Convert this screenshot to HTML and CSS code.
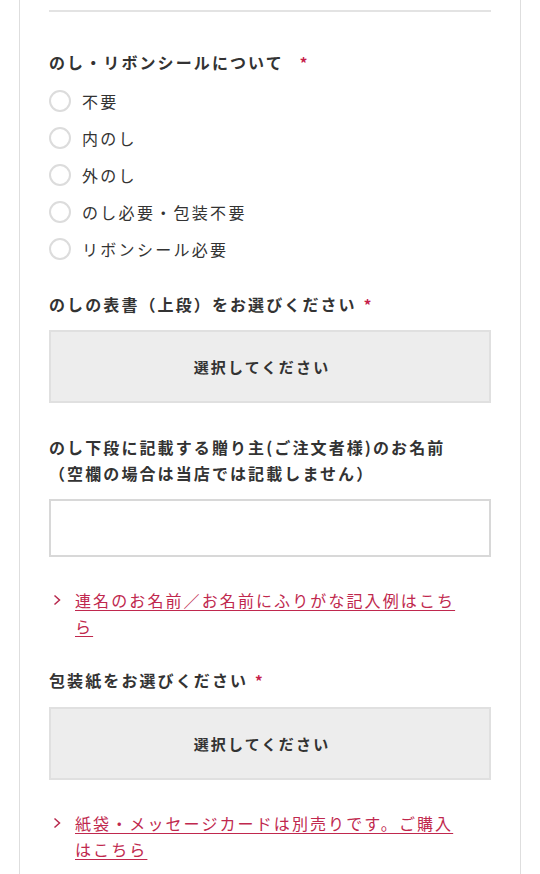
FILE: index.html
```html
<!DOCTYPE html>
<html lang="ja">
<head>
<meta charset="utf-8">
<link rel="stylesheet" href="styles.css">
</head>
<body>
<div class="card">
  <hr class="divider">

  <div class="field">
    <p class="label">のし・リボンシールについて<span class="req">*</span></p>
    <ul class="radios">
      <li class="radio"><span class="circle"></span>不要</li>
      <li class="radio"><span class="circle"></span>内のし</li>
      <li class="radio"><span class="circle"></span>外のし</li>
      <li class="radio"><span class="circle"></span>のし必要・包装不要</li>
      <li class="radio"><span class="circle"></span>リボンシール必要</li>
    </ul>
  </div>

  <div class="field">
    <p class="label">のしの表書（上段）をお選びください<span class="req req-tight">*</span></p>
    <div class="select">選択してください</div>
  </div>

  <div class="field field-wide">
    <p class="label">のし下段に記載する贈り主(ご注文者様)のお名前<br>（空欄の場合は当店では記載しません）</p>
    <div class="input"></div>
  </div>

  <a class="link" href="#">
    <svg class="chev" width="8" height="12" viewBox="0 0 8 12"><polyline points="1.5,1.5 6.5,6 1.5,10.5" fill="none" stroke="#b8284c" stroke-width="1.5"/></svg>
    <span class="link-text">連名のお名前／お名前にふりがな記入例はこちら</span>
  </a>

  <div class="field field-pack">
    <p class="label">包装紙をお選びください<span class="req req-tight">*</span></p>
    <div class="select">選択してください</div>
  </div>

  <a class="link" href="#">
    <svg class="chev" width="8" height="12" viewBox="0 0 8 12"><polyline points="1.5,1.5 6.5,6 1.5,10.5" fill="none" stroke="#b8284c" stroke-width="1.5"/></svg>
    <span class="link-text">紙袋・メッセージカードは別売りです。ご購入はこちら</span>
  </a>
</div>
</body>
</html>
```

FILE: styles.css
```css
html, body {
  margin: 0;
  padding: 0;
  background: #fff;
}
body {
  font-family: "Noto Sans CJK JP", "Noto Sans", sans-serif;
  color: #333;
}
.card {
  margin: 0 19px;
  border-left: 1px solid #dedede;
  border-right: 1px solid #dedede;
  padding: 10px 29px 12px 29px;
}
.divider {
  margin: 0;
  border: 0;
  border-top: 2px solid #e3e3e3;
}
.field {
  margin-top: 37px;
}
.field + .field {
  margin-top: 24px;
}
.field-wide {
  margin-top: 31px !important;
}
.field-pack {
  margin-top: 28px;
}
.label {
  margin: 0;
  font-size: 16px;
  font-weight: 700;
  line-height: 26px;
  letter-spacing: 2.1px;
  color: #333;
}
.req {
  color: #c6204a;
  font-size: 15px;
  line-height: 0;
  margin-left: 16px;
}
.req-tight {
  margin-left: 7px;
}
.radios {
  list-style: none;
  margin: 7px 0 0 0;
  padding: 0;
}
.radio {
  display: flex;
  align-items: center;
  height: 37px;
  font-size: 16px;
  letter-spacing: 2.3px;
  color: #333;
}
.circle {
  width: 18px;
  height: 18px;
  border: 2px solid #dcdcdc;
  border-radius: 50%;
  margin-right: 11px;
  flex: none;
}
.select {
  margin-top: 13px;
  height: 69px;
  background: #ededed;
  border: 2px solid #e0e0e0;
  display: flex;
  align-items: center;
  justify-content: center;
  padding-right: 16px;
  font-size: 15px;
  font-weight: 700;
  letter-spacing: 2.2px;
  color: #333;
}
.field-pack .select {
  margin-top: 14px;
}
.input {
  margin-top: 13px;
  height: 54px;
  border: 2px solid #d8d8d8;
  background: #fff;
}
.link {
  display: flex;
  align-items: flex-start;
  margin-top: 30px;
  padding-right: 28px;
  text-decoration: none;
}
.chev {
  flex: none;
  margin: 7px 14px 0 4px;
}
.link-text {
  font-size: 16px;
  line-height: 26px;
  letter-spacing: 2.1px;
  color: #c0284e;
  text-decoration: underline;
  text-decoration-thickness: 1px;
  text-underline-offset: 3px;
}
```
